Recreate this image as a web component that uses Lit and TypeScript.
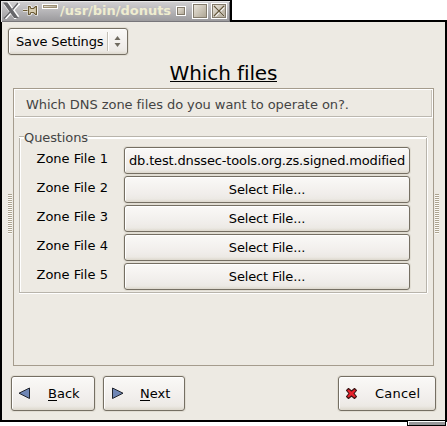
import { LitElement, html, css, svg } from "lit";
import { customElement } from "lit/decorators.js";

const FILES = ["db.test.dnssec-tools.org.zs.signed.modified", "", "", "", ""];

const logo = svg`<path d="M3 1l11 15" stroke="#fff" stroke-width="5.500"/><path d="M16 1L2 16.500" stroke="#fff" stroke-width="3"/><path d="M0 .5h4.500l11 15.500H11z" fill="#66666a"/><path d="M15 1L9.500 7.500M7 10L1 16.500" stroke="#66666a" stroke-width="1.600"/>`;
const pin = svg`<path d="M0 5.500h6" stroke="#fff" stroke-width="3"/><path d="M0 5.500h6" stroke="#6a5a35" stroke-width="1.400"/><path d="M5.500 1.500h2l1 2h2l2-2h1.500v8h-1.500l-2-2h-2l-1 2h-2z" fill="#eee7d4" stroke="#fff" stroke-width="2"/><path d="M5.500 1.500h1.500l1 2h2.500l2-2h1v8h-1l-2-2H8l-1 2H5.500z" fill="#d8cdb0" stroke="#6a5a35" stroke-width="1.200"/>`;

@customElement("app-root")
export class AppRoot extends LitElement {
  static styles = css`
    :host {
      display: flex;
      flex-direction: column;
      position: relative;
      width: 447px;
      height: 426px;
      background: #fff;
      color: #000;
      font: 13px/17px "DejaVu Sans", sans-serif;
      white-space: nowrap;
      overflow: hidden;
    }
    * { box-sizing: border-box; }
    svg { display: block; fill: none; flex: none; }
    .title {
      display: flex;
      align-items: flex-start;
      width: 232px;
      height: 22px;
      margin-bottom: -2px;
      z-index: 1;
      border: solid #000;
      border-width: 1px 2px 0 1px;
      background: linear-gradient(#d2d1d3, #99989b);
      box-shadow: inset 1px 1px #e8e8e8, inset -1px -1px #77767a;
    }
    .title .logo { margin: 1px 0 0 2px; }
    .title .pin { margin: 4px 0 0 3px; }
    .title .shade { margin: 3px 0 0 4px; }
    .name {
      width: 116px;
      flex: none;
      margin: 1px 0 0 2px;
      font-weight: bold;
      color: #efedd0;
      letter-spacing: -0.02px;
    }
    .tile {
      flex: none;
      border: 1px solid #fff;
      outline: 1px solid #837b6c;
      outline-offset: -2px;
      background: linear-gradient(135deg, #eee9df, #aaa18f);
    }
    .shade { width: 16px; height: 5px; outline-color: #9b8f74; }
    .mini { width: 10px; height: 10px; margin: 5px 0 0 0; }
    .max { width: 16px; height: 16px; margin: 2px 0 0 6px; }
    .close { width: 16px; height: 16px; margin: 2px 0 0 3px; }
    .window {
      display: flex;
      flex-direction: column;
      height: 402px;
      border: 2px solid #000;
      background: #edeae3;
    }
    .btn {
      display: flex;
      align-items: center;
      border: 1px solid #756f63;
      border-radius: 3px;
      background: linear-gradient(#faf9f7, #f0edea 70%, #ece9e4 88%, #ddd8cd);
      box-shadow: inset 1px 1px #fff, 0 0 0 1px #e1ddd3;
    }
    .combo { flex: none; width: 120px; height: 27px; margin: 6px 0 0 6px; padding-left: 7px; }
    .combo span { width: 91px; letter-spacing: -0.15px; }
    .sep { width: 2px; height: 19px; background: linear-gradient(90deg, #c3bfb5 50%, #fff 50%); margin-right: 5px; }
    h1 {
      align-self: center;
      flex: none;
      height: 28px;
      margin: 5px 0 0 0;
      font-size: 20px;
      font-weight: normal;
      letter-spacing: -0.1px;
    }
    h1 span { display: block; height: 22px; border-bottom: 1px solid #000; line-height: 26px; }
    .middle { display: flex; flex: none; align-items: flex-start; height: 278px; padding-left: 6px; }
    .grip {
      width: 4px;
      height: 40px;
      margin-top: 106px;
      background: repeating-linear-gradient(#aca390 0 1px, #fbfaf6 1px 2px);
    }
    .panel { width: 421px; height: 278px; margin: 0 1px; border: 1px solid #a59c8d; }
    .intro {
      height: 29px;
      padding: 6px 0 0 11px;
      border: 1px solid #fff;
      box-shadow: inset 0 -1px #bcb8b0, inset -1px 0 #c8c4bc;
      color: #444;
      letter-spacing: -0.06px;
    }
    .questions {
      width: 408px;
      height: 163px;
      margin: 11px 0 0 5px;
      display: flex;
      flex-direction: column;
    }
    .legend { display: flex; align-items: center; height: 17px; color: #444; letter-spacing: -0.1px; }
    .legend::before, .legend::after { content: ""; height: 2px; border-top: 1px solid #b8b4ab; background: #fff; }
    .legend::before { width: 5px; }
    .legend::after { flex: 1; }
    .rows {
      flex: 1;
      margin-top: -8px;
      border: solid #b8b4ab;
      border-width: 0 1px 1px;
      box-shadow: inset 1px 0 #fff, 1px 0 #fff, 0 1px #fff;
      padding: 9px 0 0 16px;
    }
    .row { display: flex; height: 29px; }
    .row label { flex: none; width: 88px; padding: 3px 0 0 0.5px; }
    .file { flex: none; width: 286px; height: 27px; justify-content: center; letter-spacing: -0.15px; }
    .nav { display: flex; margin: 10px 9px 0 9px; }
    .nav .btn { height: 35px; }
    .nav svg { margin: -1px 0 0 6px; }
    .nav span { margin-left: 17px; }
    .back { width: 84px; }
    .next { width: 82px; margin-left: 8px; }
    .cancel { width: 98px; margin-left: auto; letter-spacing: 0.2px; }
    u { text-decoration: none; border-bottom: 1px solid #000; display: inline-block; height: 16px; }
    .corner {
      position: absolute;
      left: 407px;
      top: 420px;
      width: 39px;
      height: 6px;
      border: 1px solid #000;
      background: linear-gradient(#fff 25%, #99989b 25%);
      box-shadow: inset 1px 0 #fff;
      z-index: 1;
    }
  `;

  private arrow(points: string) {
    return html`<svg width="13" height="13" viewBox="0 0 13 13">
      <path d=${points} fill="#6f86b5" stroke="#20242c" stroke-linejoin="round" />
    </svg>`;
  }

  render() {
    return html`
      <div class="title">
        <svg class="logo" width="17" height="17">${logo}</svg>
        <svg class="pin" width="15" height="11">${pin}</svg>
        <div class="tile shade"></div>
        <div class="name">/usr/bin/donuts</div>
        <div class="tile mini"></div>
        <div class="tile max"></div>
        <div class="tile close">
          <svg width="14" height="14"><path d="M3 3l9 9M12 3l-9 9" stroke="#fff" stroke-width="2" /><path d="M2 2l10 10M12 2L2 12" stroke="#65583c" stroke-width="1.300" /></svg>
        </div>
      </div>
      <div class="window">
        <div class="btn combo">
          <span>Save Settings</span>
          <div class="sep"></div>
          <svg width="7" height="13"><path d="M.5 5L3.500 1l3 4zM.5 8l3 4 3-4z" fill="#706b60" /></svg>
        </div>
        <h1><span>Which files</span></h1>
        <div class="middle">
          <div class="grip"></div>
          <div class="panel">
            <div class="intro">Which DNS zone files do you want to operate on?.</div>
            <div class="questions">
              <div class="legend">Questions</div>
              <div class="rows">
                ${FILES.map(
                  (file, i) => html`<div class="row">
                    <label>Zone File ${i + 1}</label>
                    <div class="btn file">${file || "Select File..."}</div>
                  </div>`
                )}
              </div>
            </div>
          </div>
          <div class="grip"></div>
        </div>
        <div class="nav">
          <div class="btn back">${this.arrow("M11.500 1v10.500L1 6.200z")}<span><u>B</u>ack</span></div>
          <div class="btn next">${this.arrow("M2.500 1v10.500L13 6.200z")}<span><u>N</u>ext</span></div>
          <div class="btn cancel">
            <svg width="13" height="13"><path d="M3.500 1.500L6.500 4l3-2.500 2 2L9 6.500l2.500 3-2 2-3-2.500-3 2.500-2-2L4 6.500l-2.500-3z" fill="#e8222c" stroke="#3c1414" stroke-width="1.100" stroke-linejoin="round" /></svg>
            <span>Cancel</span>
          </div>
        </div>
      </div>
      <div class="corner"></div>
    `;
  }
}
